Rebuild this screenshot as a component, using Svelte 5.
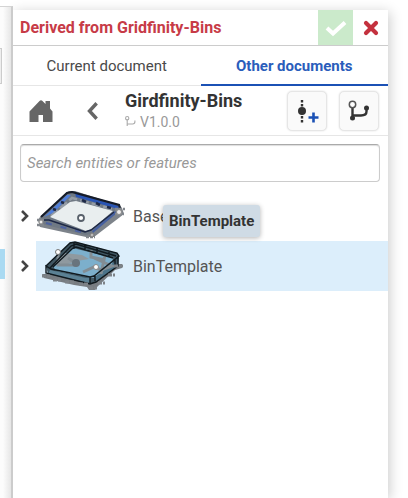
<script>
  let activeTab = $state('other');
  let query = $state('');
  const tabs = [
    { id: 'current', label: 'Current document' },
    { id: 'other', label: 'Other documents' },
  ];
</script>

<div class="shell">
  <aside class="behind">
    <div class="behind-field"></div>
    <div class="behind-row"></div>
  </aside>

  <section class="panel" aria-label="Derived">
    <header class="head">
      <h1>Derived from Gridfinity-Bins</h1>
      <button class="accept" aria-label="Accept">
        <svg width="22" height="18" viewBox="0 0 22 18"><path d="M2 9 8 14.500 20 3.500" fill="none" stroke="#fff" stroke-width="4" /></svg>
      </button>
      <button class="cancel" aria-label="Cancel">
        <svg width="16" height="16" viewBox="0 0 16 16"><path d="M3 3 13 13M13 3 3 13" stroke="#c4313e" stroke-width="4.200" stroke-linecap="round" /></svg>
      </button>
    </header>

    <nav class="tabs">
      {#each tabs as tab}
        <button class="tab" class:active={activeTab === tab.id} onclick={() => (activeTab = tab.id)}>{tab.label}</button>
      {/each}
    </nav>

    <div class="doc">
      <button class="plain home" aria-label="Home">
        <svg width="24" height="24" viewBox="0 0 24 24"><path d="M0.500 12.500 10.500 2Q12 .6 13.500 2L16.500 5V2h4.500v7.500L23.500 12.500V23H14v-7H9.500v7H.5Z" fill="#666" /></svg>
      </button>
      <button class="plain back" aria-label="Back">
        <svg width="12" height="18" viewBox="0 0 12 18"><path d="M9.500 2.500 3.500 9 9.500 15.500" fill="none" stroke="#666" stroke-width="3.400" stroke-linecap="square" /></svg>
      </button>
      <div class="titles">
        <h2>Girdfinity-Bins</h2>
        <p>
          <svg width="11" height="11" viewBox="0 0 20 20"><g fill="none" stroke="#aaa" stroke-width="2"><circle cx="4" cy="4" r="3" /><path d="M4 7v11M4 14.500h10q4 0 4-4V8" /></g></svg>
          V1.0.0
        </p>
      </div>
      <button class="tool" aria-label="Create version">
        <svg width="26" height="28" viewBox="0 0 26 28">
          <path d="M8 3v23" stroke="#333" stroke-width="2.400" stroke-dasharray="2.600 1.400" />
          <circle cx="8" cy="14" r="4" fill="#333" />
          <path d="M19.500 15.500v10M14.500 20.500h10" stroke="#1b51b5" stroke-width="2.600" />
        </svg>
      </button>
      <button class="tool" aria-label="Change version">
        <svg width="22" height="22" viewBox="0 0 22 22">
          <path d="M4.500 7v11M4.500 15.500H13q5.500 0 5.500-4V8.500" fill="none" stroke="#333" stroke-width="2.400" />
          <circle cx="4.500" cy="4.500" r="3.200" fill="#fff" stroke="#555" stroke-width="1.500" />
          <circle cx="4.500" cy="18" r="2.500" fill="#333" /><circle cx="18.500" cy="8" r="2.500" fill="#333" />
        </svg>
      </button>
    </div>

    <div class="search">
      <input type="text" aria-label="Search entities or features" placeholder="Search entities or features" bind:value={query} />
    </div>

    <ul class="list">
      <li>
        <button class="expand" aria-label="Expand Base">
          <svg width="10" height="14" viewBox="0 0 10 14"><path d="M2 2 7 7 2 12" fill="none" stroke="#444" stroke-width="2.600" /></svg>
        </button>
        <button class="item">
          <svg class="thumb" width="90" height="50" viewBox="0 0 90 50">
            <path d="M33 0H39L83 14 86 17 88 23 58 46H50L4 36 2 29 4 26 30 2Z" fill="#7d838a" />
            <path d="M5 28 31 3 37 1 83 16 54 43 50 44 6 33Z" fill="#6f7984" />
            <path d="M8 26 31 4 35 4 17 22Z" fill="#4f7fdb" />
            <path d="M39 2 83 15 82 18 40 6Z" fill="#2a55b4" />
            <path d="M56 40 79 20 81 22 57 42Z" fill="#46609f" />
            <path d="M10 32 49 42" stroke="#4d62a0" stroke-width="2" stroke-dasharray="6 9" />
            <path d="M15 25 36 7 76 18" fill="none" stroke="#949ca6" stroke-width="2.500" stroke-dasharray="9 3" />
            <path d="M5 26 31 2 36 1 83 14 84 17" fill="none" stroke="#151b28" stroke-width="2.200" />
            <path d="M14 26 34 11 40 10 77 20 56 38 50 40Z" fill="#e9eeef" />
            <path d="M5 29 13 29 49 41 55 39 78 21" fill="none" stroke="#1d2846" stroke-width="1.400" />
            <path d="M25 11 28 12M17 18 20 19M46 9 50 11M60 12 64 14M71 16 75 17" stroke="#1e2947" stroke-width="2.600" />
            <path d="M1 29H8M1 34H8M79 18H89M79 23H88M50 46H59" stroke="#82878d" stroke-width="2.600" stroke-dasharray="3 1" />
            <circle cx="45" cy="27" r="3" fill="#fff" stroke="#59616b" stroke-width="1.800" />
            <circle cx="5" cy="31" r="2" fill="#eee" stroke="#888" /><circle cx="83" cy="21" r="2.500" fill="#eee" stroke="#888" /><circle cx="56" cy="44" r="2" fill="#bbb" stroke="#777" />
          </svg>
          <span>Base</span>
        </button>
      </li>
      <li>
        <button class="expand" aria-label="Expand BinTemplate">
          <svg width="10" height="14" viewBox="0 0 10 14"><path d="M2 2 7 7 2 12" fill="none" stroke="#444" stroke-width="2.600" /></svg>
        </button>
        <button class="item hovered">
          <svg class="thumb" width="90" height="50" viewBox="0 0 90 50">
            <path d="M6 33H14L55 42 77 23H86V27L79 29 61 46 59 49H53L51 46 38 44 8 37Z" fill="#777c81" />
            <path d="M10 25 35 1H40L81 12 83 15 82 25 60 41 54 43 12 33Z" fill="#405662" />
            <path d="M17 25 37 7 77 17 76 26 57 37 20 30Z" fill="#7cafcc" />
            <path d="M14 29 50 37 54 36V42L12 33Z" fill="#5b8194" />
            <path d="M59 36 79 21 80 26 60 40Z" fill="#4b7389" />
            <path d="M29 12 46 14 53 18 41 20 26 25 18 22Z" fill="#8f999f" />
            <path d="M22 12v12l17 0M32 17l9 6M55 9v7l14 3M69 14l-4 19M58 17l18 8-11 4-7-3-11 5" fill="none" stroke="#828d94" stroke-width="3" />
            <circle cx="40" cy="22" r="4" fill="#68747d" />
            <path d="M10 25 34 2 39 1 81 12 83 15 58 35 54 36 15 28 10 25V32L54 43 60 41 82 25V15M17 26 37 7 40 6 77 17M14 27 35 5 40 3 80 15M38 2V8M49 4V10M61 7V13M73 10V16M54 36V42M59 35V40M79 18V26" fill="none" stroke="#10191e" stroke-width="1.400" />
            <path d="M6 35H14M17 39H25M29 41H38M43 43H52M53 47H61M62 42H69M72 34H79M78 25H87" stroke="#7d8287" stroke-width="3" stroke-dasharray="4 1" />
            <circle cx="22" cy="11" r="2.500" fill="#fff" stroke="#777" /><circle cx="60" cy="26" r="2.500" fill="#fff" stroke="#888" />
          </svg>
          <span>BinTemplate</span>
        </button>
        <div class="tip" role="tooltip">BinTemplate</div>
      </li>
    </ul>
  </section>
</div>

<style>
  :global(body) { background: #fff; }
  .shell, .shell * { box-sizing: border-box; }
  .shell {
    display: flex;
    min-height: 100vh;
    padding-right: 20px;
    overflow: hidden;
    font-family: Roboto, "Liberation Sans", sans-serif;
    color: #333;
  }
  button { font: inherit; border: 0; padding: 0; margin: 0; background: none; color: inherit; cursor: pointer; }
  h1, h2, p, ul { margin: 0; padding: 0; }
  svg { display: block; flex: none; }

  .behind {
    position: relative;
    z-index: 1;
    flex: 0 0 13px;
    margin-top: 6px;
    border-top: 1px solid #d4d4d4;
    border-right: 2px solid #ccc;
    background: linear-gradient(90deg, #fcfcfc 3px, #e6e6e6);
  }
  .behind-field { width: 2px; height: 36px; margin-top: 41px; border: 1px solid #ccc; border-left: 0; background: #eee; }
  .behind-row { width: 5px; height: 30px; margin-top: 165px; background: #aadaf2; }

  .panel { flex: 1; min-width: 0; margin-top: 10px; background: #fff; box-shadow: 2px 2px 12px rgba(0, 0, 0, 0.2); }

  .head { display: flex; align-items: stretch; height: 36px; border-bottom: 1px solid #ccc; }
  h1 { flex: 1; padding-left: 7px; font-size: 16px; line-height: 36px; font-weight: 700; color: #c73b47; white-space: nowrap; }
  .accept, .cancel { display: grid; place-items: center; width: 35px; }
  .accept { background: #cbeacb; }

  .tabs { display: flex; height: 40px; border-bottom: 1px solid #e6e6e6; }
  .tab { flex: 1; height: 40px; padding-top: 2px; border-bottom: 2px solid transparent; font-size: 15px; color: #4a4a4a; }
  .tab.active { border-bottom-color: #1b51b5; font-weight: 700; color: #2a5dbb; }

  .doc { display: flex; align-items: center; height: 50px; padding-right: 5px; border-bottom: 1px solid #e6e6e6; }
  .home { margin-left: 16px; }
  .back { margin-left: 33px; }
  .titles { flex: 1; padding-left: 27px; }
  h2 { font-size: 18px; line-height: 22px; font-weight: 700; white-space: nowrap; }
  p { display: flex; align-items: center; gap: 4px; font-size: 14px; line-height: 20px; color: #999; }
  .tool { display: grid; place-items: center; width: 40px; height: 40px; margin-right: 12px; border: 1px solid #e6e6e6; border-radius: 5px; background: #fafafa; box-shadow: 0 0 2px #ddd; }
  .tool:last-child { margin-right: 4px; }

  .search { padding: 8px 8px 9px 7px; }
  input { display: block; width: 100%; height: 38px; padding: 0 6px; border: 1px solid #ccc; border-top-color: #aaa; border-radius: 4px; box-shadow: inset 0 1px 1px #ddd; font: italic 15px Roboto, "Liberation Sans", sans-serif; outline: 0; background: #fff; }
  input::placeholder { color: #999; opacity: 1; }

  .list { list-style: none; }
  li { position: relative; display: flex; height: 50px; }
  .expand { display: grid; place-items: center; flex: 0 0 23px; }
  .item { display: flex; flex: 1; align-items: center; gap: 7px; font-size: 16px; color: #555; }
  .hovered { background: #dceefb; }
  .tip { position: absolute; left: 150px; top: -36px; padding: 0 6px; border-radius: 3px; background: #cfdbe5; box-shadow: 0 1px 5px rgba(0, 0, 0, 0.3); font-size: 15px; line-height: 32px; font-weight: 700; color: #333; }
</style>
